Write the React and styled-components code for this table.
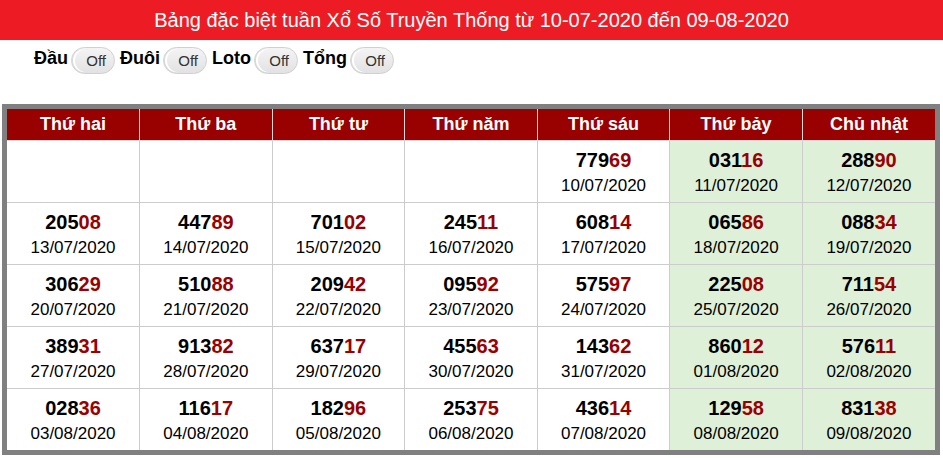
import React from "react";
import styled, { createGlobalStyle } from "styled-components";

const Global = createGlobalStyle`
  html, body { margin: 0; padding: 0; background: #fff; }
  body { font-family: "Liberation Sans", Arial, sans-serif; color: #000; }
`;

const Page = styled.div`
  width: 943px;
`;

const TitleBar = styled.div`
  height: 40px;
  background: #ed1c24;
  color: #fff;
  font-size: 20px;
  display: flex;
  align-items: center;
  justify-content: center;
`;

const Filters = styled.div`
  display: flex;
  align-items: center;
  padding: 7px 0 0 34px;
  height: 27px;
`;

const FilterLabel = styled.span`
  font-weight: bold;
  font-size: 18px;
  margin-right: 3px;
  margin-top: -4px;
`;

const Toggle = styled.span`
  position: relative;
  display: inline-flex;
  align-items: center;
  justify-content: flex-end;
  box-sizing: border-box;
  width: 44px;
  height: 27px;
  margin-right: 5px;
  padding-right: 8px;
  border: 1px solid #d0d0d0;
  border-radius: 14px;
  background: linear-gradient(#f4f4f4, #e2e2e2);
  font-size: 15px;
  color: #333;
  &::before {
    content: "";
    position: absolute;
    left: 1px;
    top: 1px;
    width: 23px;
    height: 23px;
    border-radius: 50%;
    box-shadow: inset 2px 0 0 #fff, -1px 0 0 #d8d8d8;
  }
`;

const TableWrap = styled.div`
  margin: 30px 0 0 2px;
  width: 938px;
  box-sizing: border-box;
  border: 5px solid #808080;
`;

const Table = styled.table`
  width: 100%;
  border-collapse: collapse;
  border-style: hidden;
  table-layout: fixed;
`;

const Th = styled.th`
  background: #990000;
  color: #fff;
  font-size: 18px;
  font-weight: bold;
  height: 31px;
  padding: 0;
  border: 1px solid #d8d8d8;
  border-top: none;
`;

const Td = styled.td`
  background: ${(p) => (p.$weekend ? "#dff0d8" : "#fff")};
  border: 1px solid #cccccc;
  height: 55px;
  padding: 6px 0 0;
  text-align: center;
  vertical-align: top;
`;

const Num = styled.div`
  font-size: 20px;
  font-weight: bold;
  line-height: 26px;
  color: #000;
`;

const Tail = styled.span`
  color: #990000;
`;

const DateText = styled.div`
  margin-top: 1px;
  font-size: 17px;
  line-height: 24px;
  color: #000;
`;

const days = ["Thứ hai", "Thứ ba", "Thứ tư", "Thứ năm", "Thứ sáu", "Thứ bảy", "Chủ nhật"];

const rows = [
  [null, null, null, null, ["77969", "10/07/2020"], ["03116", "11/07/2020"], ["28890", "12/07/2020"]],
  [["20508", "13/07/2020"], ["44789", "14/07/2020"], ["70102", "15/07/2020"], ["24511", "16/07/2020"], ["60814", "17/07/2020"], ["06586", "18/07/2020"], ["08834", "19/07/2020"]],
  [["30629", "20/07/2020"], ["51088", "21/07/2020"], ["20942", "22/07/2020"], ["09592", "23/07/2020"], ["57597", "24/07/2020"], ["22508", "25/07/2020"], ["71154", "26/07/2020"]],
  [["38931", "27/07/2020"], ["91382", "28/07/2020"], ["63717", "29/07/2020"], ["45563", "30/07/2020"], ["14362", "31/07/2020"], ["86012", "01/08/2020"], ["57611", "02/08/2020"]],
  [["02836", "03/08/2020"], ["11617", "04/08/2020"], ["18296", "05/08/2020"], ["25375", "06/08/2020"], ["43614", "07/08/2020"], ["12958", "08/08/2020"], ["83138", "09/08/2020"]],
];

const filters = ["Đầu", "Đuôi", "Loto", "Tổng"];

export default function App() {
  return (
    <Page>
      <Global />
      <TitleBar>Bảng đặc biệt tuần Xổ Số Truyền Thống từ 10-07-2020 đến 09-08-2020</TitleBar>
      <Filters>
        {filters.map((f) => (
          <React.Fragment key={f}>
            <FilterLabel>{f}</FilterLabel>
            <Toggle>Off</Toggle>
          </React.Fragment>
        ))}
      </Filters>
      <TableWrap>
        <Table>
          <thead>
            <tr>
              {days.map((d) => (
                <Th key={d}>{d}</Th>
              ))}
            </tr>
          </thead>
          <tbody>
            {rows.map((r, i) => (
              <tr key={i}>
                {r.map((c, j) => (
                  <Td key={j} $weekend={j >= 5}>
                    {c && (
                      <>
                        <Num>
                          {c[0].slice(0, 3)}
                          <Tail>{c[0].slice(3)}</Tail>
                        </Num>
                        <DateText>{c[1]}</DateText>
                      </>
                    )}
                  </Td>
                ))}
              </tr>
            ))}
          </tbody>
        </Table>
      </TableWrap>
    </Page>
  );
}
